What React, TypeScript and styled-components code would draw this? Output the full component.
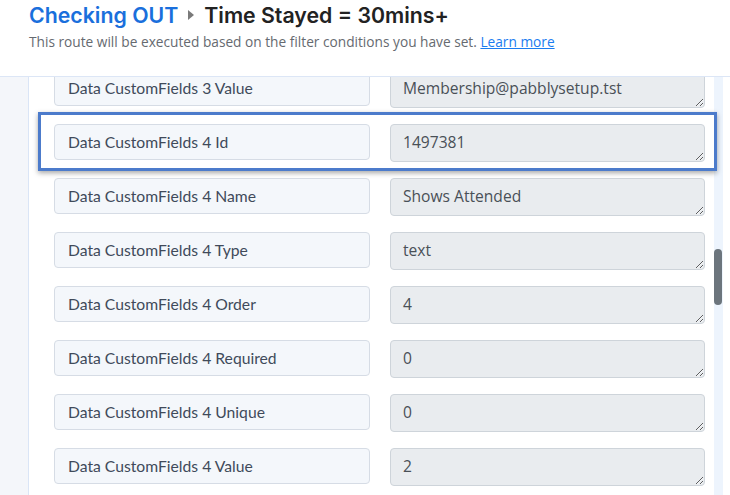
import React from "react";
import styled, { createGlobalStyle } from "styled-components";

const GlobalStyle = createGlobalStyle`
  html, body {
    margin: 0;
    padding: 0;
    background: #ffffff;
    overflow: hidden;
  }
  body {
    font-family: Lato, "Open Sans", sans-serif;
  }
  * { box-sizing: border-box; }
`;

const Page = styled.div`
  width: 730px;
  height: 495px;
  display: flex;
  flex-direction: column;
  background: #ffffff;
`;

const Header = styled.header`
  height: 77px;
  flex: none;
  padding: 1px 0 0 29px;
  border-bottom: 1px solid #dce6f6;
  background: #ffffff;
`;

const TitleLine = styled.h1`
  margin: 0;
  display: flex;
  align-items: center;
  gap: 10px;
  font-family: Inter, sans-serif;
  font-size: 21.3px;
  font-weight: 600;
  line-height: 28px;
  color: #222222;
`;

const RouteName = styled.span`
  color: #1a6fdc;
`;

const Caret = styled.span`
  width: 0;
  height: 0;
  border-top: 5px solid transparent;
  border-bottom: 5px solid transparent;
  border-left: 6px solid #7a7a7a;
`;

const Subtitle = styled.p`
  margin: 4px 0 0;
  font-family: "Open Sans", sans-serif;
  font-size: 13.7px;
  line-height: 18px;
  color: #666a70;
`;

const Link = styled.a`
  color: #1a7cf0;
  text-decoration: underline;
`;

const Body = styled.div`
  flex: 1;
  display: flex;
  overflow: hidden;
`;

const Gutter = styled.div`
  width: 29px;
  flex: none;
  background: #f4f6fa;
  border-right: 1px solid #dae5f6;
`;

const Panel = styled.main`
  width: 683px;
  flex: none;
  background: #ffffff;
  position: relative;
`;

const List = styled.div`
  margin-top: -7px;
  padding: 0 7px 0 25px;
  display: flex;
  flex-direction: column;
  gap: 16px;
`;

const Row = styled.div<{ $highlighted?: boolean }>`
  position: relative;
  z-index: 1;
  display: grid;
  grid-template-columns: 316px 315px;
  column-gap: 20px;
  align-items: start;

  &::before {
    content: "";
    display: ${(p) => (p.$highlighted ? "block" : "none")};
    position: absolute;
    top: -12px;
    left: -16px;
    right: -12px;
    bottom: -9px;
    border: 3px solid #4c7bcb;
    box-shadow: 0 2px 5px rgba(0, 0, 0, 0.35);
    pointer-events: none;
  }
`;

const FieldLabel = styled.div`
  height: 36px;
  display: flex;
  align-items: center;
  padding: 0 13px;
  background: #f4f7fb;
  border: 1px solid #d6dce5;
  border-radius: 4px;
  font-family: Lato, sans-serif;
  font-size: 15.7px;
  color: #404a5a;
  white-space: nowrap;
`;

const FieldValue = styled.textarea`
  display: block;
  width: 315px;
  height: 38px;
  margin: 0;
  padding: 6px 12px;
  background: #e9ecef;
  border: 1px solid #ced4da;
  border-radius: 4px;
  font-family: "Open Sans", sans-serif;
  font-size: 15.6px;
  line-height: 22px;
  color: #495057;
  resize: vertical;
  overflow: hidden;
  outline: none;
`;

const ScrollTrack = styled.div`
  width: 18px;
  flex: none;
  background: #ffffff;
  padding-left: 2px;
`;

const Rail = styled.div`
  width: 9px;
  height: 100%;
  background: #edf4fd;
  padding-top: 172px;
`;

const Thumb = styled.div`
  width: 8px;
  height: 56px;
  border-radius: 4px;
  background: #6c757d;
`;

const fields: { label: string; value: string }[] = [
  { label: "Data CustomFields 3 Value", value: "Membership@pabblysetup.tst" },
  { label: "Data CustomFields 4 Id", value: "1497381" },
  { label: "Data CustomFields 4 Name", value: "Shows Attended" },
  { label: "Data CustomFields 4 Type", value: "text" },
  { label: "Data CustomFields 4 Order", value: "4" },
  { label: "Data CustomFields 4 Required", value: "0" },
  { label: "Data CustomFields 4 Unique", value: "0" },
  { label: "Data CustomFields 4 Value", value: "2" },
];

export default function App() {
  return (
    <>
      <GlobalStyle />
      <Page>
        <Header>
          <TitleLine>
            <RouteName>Checking OUT</RouteName>
            <Caret />
            <span>Time Stayed = 30mins+</span>
          </TitleLine>
          <Subtitle>
            This route will be executed based on the filter conditions you have set.{" "}
            <Link href="#">Learn more</Link>
          </Subtitle>
        </Header>
        <Body>
          <Gutter />
          <Panel>
            <List>
              {fields.map((f, i) => (
                <Row key={f.label} $highlighted={i === 1}>
                  <FieldLabel>{f.label}</FieldLabel>
                  <FieldValue readOnly rows={1} value={f.value} />
                </Row>
              ))}
            </List>
          </Panel>
          <ScrollTrack>
            <Rail>
              <Thumb />
            </Rail>
          </ScrollTrack>
        </Body>
      </Page>
    </>
  );
}
